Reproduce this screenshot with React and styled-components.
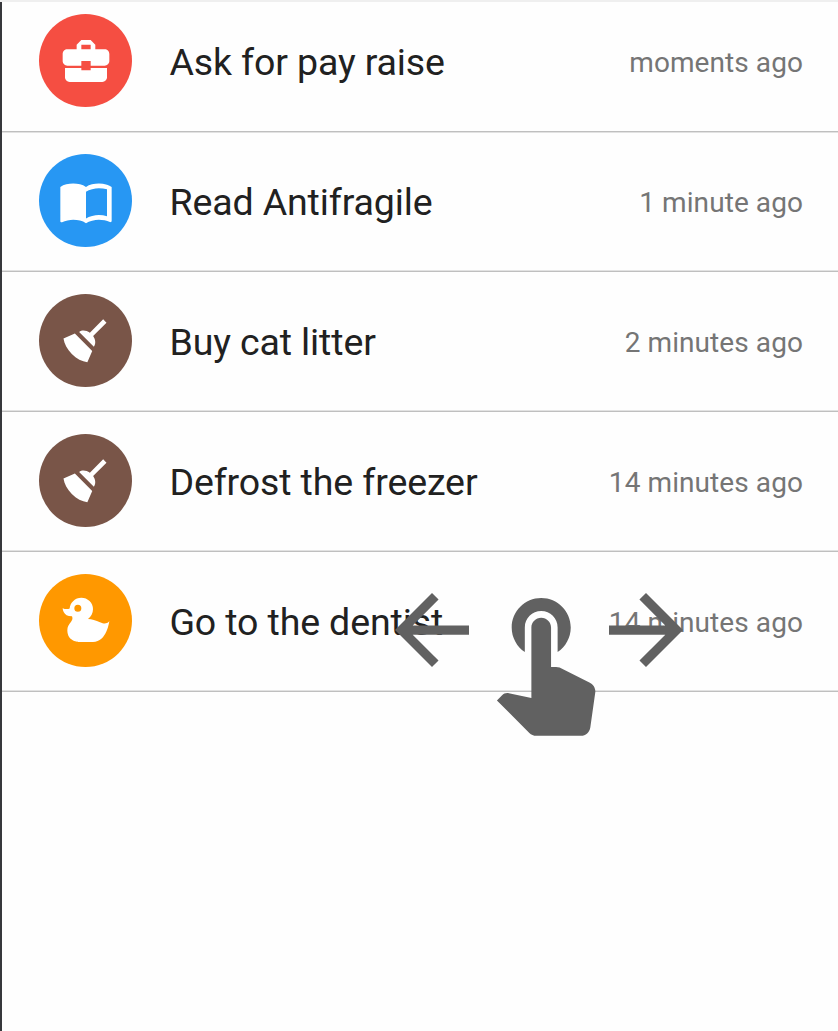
import React from "react";
import styled, { createGlobalStyle } from "styled-components";

const GlobalStyle = createGlobalStyle`
  * { box-sizing: border-box; }
  body { margin: 0; background: #fefefe; font-family: Roboto, sans-serif; }
`;

const Screen = styled.main`
  position: relative;
  height: 1031px;
  overflow: hidden;
  background: #fefefe;
  border-top: 2px solid #efefef;
`;

const Content = styled.div`
  height: 100%;
  border-left: 2px solid #37383c;
`;

const List = styled.ul`
  list-style: none;
  margin: 0;
  padding: 0;
`;

const Row = styled.li`
  display: flex;
  align-items: flex-start;
  height: ${(p) => (p.$first ? 130 : 140)}px;
  padding: ${(p) => (p.$first ? 12.4 : 22)}px 35px 0 37px;
  border-bottom: 1px solid #bfbfbf;
  box-shadow: ${(p) => (p.$first ? "0 1px 0 #e2e2e2" : "inset 0 -1px 0 #e2e2e2")};
`;

const Avatar = styled.span`
  display: flex;
  align-items: center;
  justify-content: center;
  flex: none;
  width: 93px;
  height: 93px;
  border-radius: 50%;
  background: ${(p) => p.$color};
`;

const Title = styled.span`
  flex: 1;
  margin-left: 37.4px;
  padding-top: 2px;
  font-size: 37.5px;
  line-height: 93px;
  letter-spacing: -0.12px;
  color: #212121;
  white-space: nowrap;
`;

const Time = styled.time`
  padding-top: 2px;
  font-size: 28px;
  line-height: 93px;
  letter-spacing: 0.08px;
  color: #757575;
  white-space: nowrap;
`;

const Icon = styled.svg`
  display: block;
  width: 56px;
  height: 56px;
  fill: #fff;
`;

const SwipeHint = styled.div`
  position: absolute;
  left: 395.3px;
  top: 591px;
  display: flex;
  align-items: flex-start;
`;

const Arrow = styled.svg`
  display: block;
  width: 74px;
  height: 74px;
  fill: #616161;
  transform: ${(p) => (p.$right ? "scaleX(-1)" : "none")};
`;

const Hand = styled.svg`
  display: block;
  width: 105px;
  height: 137.8px;
  margin: 5px 12.4px 0 22.3px;
  fill: #616161;
`;

const paths = {
  work: "M10 16v-1H3.01L3 19c0 1.11.89 2 2 2h14c1.11 0 2-.89 2-2v-4h-7v1h-4zm10-9h-4.01V5l-2-2h-4l-2 2v2H4c-1.1 0-2 .9-2 2v3c0 1.11.89 2 2 2h6v-2h4v2h6c1.1 0 2-.9 2-2V9c0-1.1-.9-2-2-2zm-6 0h-4V5h4v2z",
  book: "M21,5C19.89,4.65 18.67,4.5 17.5,4.5C15.55,4.5 13.45,4.9 12,6C10.55,4.9 8.45,4.5 6.5,4.5C4.55,4.5 2.45,4.9 1,6V20.65C1,20.9 1.25,21.15 1.5,21.15C1.6,21.15 1.65,21.1 1.75,21.1C3.1,20.45 5.05,20 6.5,20C8.45,20 10.55,20.4 12,21.5C13.35,20.65 15.8,20 17.5,20C19.15,20 20.85,20.3 22.25,21.05C22.35,21.1 22.4,21.1 22.5,21.1C22.75,21.1 23,20.85 23,20.6V6C22.4,5.55 21.75,5.25 21,5M21,18.5C19.9,18.15 18.7,18 17.5,18C15.8,18 13.35,18.65 12,19.5V8C13.35,7.15 15.8,6.5 17.5,6.5C18.7,6.5 19.9,6.65 21,7V18.5Z",
  broom: "M19.36,2.72L20.78,4.14L15.06,9.85C16.13,11.39 16.28,13.24 15.38,14.44L9.06,8.12C10.26,7.22 12.11,7.37 13.65,8.44L19.36,2.72M5.93,17.57C3.92,15.56 2.69,13.16 2.35,10.92L7.23,8.83L14.67,16.27L12.58,21.15C10.34,20.81 7.94,19.58 5.93,17.57Z",
  duck: "M8.5,5A1.5,1.5 0 0,0 7,6.5A1.5,1.5 0 0,0 8.5,8A1.5,1.5 0 0,0 10,6.5A1.5,1.5 0 0,0 8.5,5M10,2A5,5 0 0,1 15,7C15,8.7 14.15,10.2 12.86,11.1C14.44,11.25 16.22,11.61 18,12.5C21,14 22,12 22,12C22,12 21,21 15,21H9C9,21 4,21 4,16C4,13 7,12 6,10C2,10 2,6.5 2,6.5C3,7 4.24,7 5,6.65C5.19,4.05 7.36,2 10,2Z",
  arrow: "M20 11H7.83l5.59-5.59L12 4l-8 8 8 8 1.41-1.41L7.83 13H20v-2z",
  touch: "M9 11.24V7.5C9 6.12 10.12 5 11.5 5S14 6.12 14 7.5v3.74c1.21-.81 2-2.18 2-3.74C16 5.01 13.99 3 11.5 3S7 5.01 7 7.5c0 1.56.79 2.93 2 3.74zm9.84 4.63l-4.54-2.26c-.17-.07-.35-.11-.54-.11H13v-6c0-.83-.67-1.5-1.5-1.5S10 6.67 10 7.5v10.74l-3.43-.72c-.08-.01-.15-.03-.24-.03-.31 0-.59.13-.79.33l-.79.8 4.94 4.94c.27.27.65.44 1.06.44h6.79c.75 0 1.33-.55 1.44-1.28l.75-5.27c.01-.07.02-.14.02-.2 0-.62-.38-1.16-.91-1.38z",
};

const tasks = [
  { title: "Ask for pay raise", time: "moments ago", icon: "work", color: "#f54e42" },
  { title: "Read Antifragile", time: "1 minute ago", icon: "book", color: "#2797f3" },
  { title: "Buy cat litter", time: "2 minutes ago", icon: "broom", color: "#795548" },
  { title: "Defrost the freezer", time: "14 minutes ago", icon: "broom", color: "#795548" },
  { title: "Go to the dentist", time: "14 minutes ago", icon: "duck", color: "#ff9800" },
];

export default function App() {
  return (
    <Screen>
      <GlobalStyle />
      <Content>
        <List>
          {tasks.map((task, i) => (
            <Row key={task.title} $first={i === 0}>
              <Avatar $color={task.color}>
                <Icon viewBox="0 0 24 24"><path d={paths[task.icon]} /></Icon>
              </Avatar>
              <Title>{task.title}</Title>
              <Time>{task.time}</Time>
            </Row>
          ))}
        </List>
      </Content>
      <SwipeHint>
        <Arrow viewBox="4 4 16 16"><path d={paths.arrow} /></Arrow>
        <Hand viewBox="4 3 16 21"><path d={paths.touch} /></Hand>
        <Arrow $right viewBox="4 4 16 16"><path d={paths.arrow} /></Arrow>
      </SwipeHint>
    </Screen>
  );
}
